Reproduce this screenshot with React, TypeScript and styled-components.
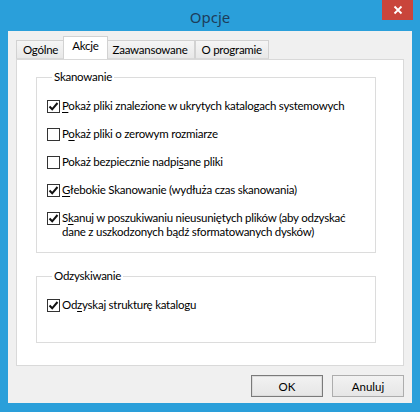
import React from "react";
import styled, { createGlobalStyle } from "styled-components";

const Global = createGlobalStyle`
  html, body { margin: 0; padding: 0; background: #2a9fda; }
  * { box-sizing: border-box; }
`;

const FONT = `Lato, "Noto Sans", "Liberation Sans", sans-serif`;

const Window = styled.div`
  width: 420px;
  height: 412px;
  background: #2a9fda;
  display: flex;
  flex-direction: column;
  font-family: ${FONT};
  font-size: 11.5px;
  letter-spacing: -0.25px;
  color: #000;
`;

const TitleBar = styled.div`
  position: relative;
  height: 31px;
  flex: none;
  display: flex;
  align-items: center;
  justify-content: center;
`;

const Title = styled.div`
  font-family: "Noto Sans", sans-serif;
  font-size: 15px;
  letter-spacing: 0;
  color: #1d3d5a;
  margin-top: 2px;
`;

const CloseButton = styled.div`
  position: absolute;
  top: 0;
  right: 7px;
  width: 31px;
  height: 20px;
  background: #c9453b;
  display: flex;
  align-items: center;
  justify-content: center;
`;

const Client = styled.div`
  flex: 1;
  margin: 0 8px 9px 8px;
  background: #f0f0f0;
  padding: 6px 8px 6px 8px;
  display: flex;
  flex-direction: column;
`;

const TabStrip = styled.div`
  height: 22px;
  display: flex;
  align-items: flex-end;
  position: relative;
  z-index: 1;
`;

const Tab = styled.div<{ $active?: boolean }>`
  height: ${(p) => (p.$active ? 23 : 19)}px;
  padding: 0 ${(p) => (p.$active ? 8 : 6)}px;
  margin: 0 ${(p) => (p.$active ? -2 : 0)}px;
  border: 1px solid #d2d2d2;
  border-bottom: ${(p) => (p.$active ? "none" : "1px solid #d9d9d9")};
  background: ${(p) => (p.$active ? "#ffffff" : "linear-gradient(#f5f5f5, #e8e8e8)")};
  position: relative;
  z-index: ${(p) => (p.$active ? 2 : 1)};
  display: flex;
  align-items: ${(p) => (p.$active ? "flex-start" : "center")};
  padding-top: ${(p) => (p.$active ? 2 : 0)}px;
  color: #000;
  white-space: nowrap;
  & + & { border-left: ${(p) => (p.$active ? "1px solid #d2d2d2" : "none")}; }
`;

const Panel = styled.div`
  height: 307px;
  background: #fff;
  border: 1px solid #d9d9d9;
  padding: 10px 27px 0 19px;
  display: flex;
  flex-direction: column;
  gap: 16px;
`;

const Group = styled.fieldset<{ $height?: number }>`
  margin: 0;
  border: 1px solid #dcdcdc;
  padding: 15px 10px 13px 10px;
  min-width: 0;
  ${(p) => (p.$height ? `height: ${p.$height}px;` : "")}
  display: flex;
  flex-direction: column;
  gap: 14px;
`;

const Legend = styled.legend`
  margin-left: 5px;
  padding: 0 2px;
  line-height: 14px;
`;

const Row = styled.label`
  display: flex;
  align-items: flex-start;
  gap: 2px;
  line-height: 14px;
  white-space: nowrap;
`;

const Box = styled.span`
  flex: none;
  width: 13px;
  height: 13px;
  border: 1px solid #333;
  background: #fff;
  display: flex;
  align-items: center;
  justify-content: center;
  margin-top: 1px;
`;

const Key = styled.span`
  text-decoration: underline;
  text-underline-offset: 2px;
`;

const Footer = styled.div`
  margin-top: 9px;
  display: flex;
  justify-content: flex-end;
  gap: 9px;
`;

const Button = styled.div<{ $default?: boolean }>`
  width: 72px;
  height: 22px;
  border: 1px solid ${(p) => (p.$default ? "#7a7a7a" : "#adadad")};
  background: linear-gradient(#f2f2f2, #e6e6e6);
  display: flex;
  align-items: center;
  justify-content: center;
  letter-spacing: 0;
  ${(p) => (p.$default ? "box-shadow: inset 0 0 0 1px #dcdcdc;" : "")}
`;

const Check = () => (
  <svg width="11" height="11" viewBox="0 0 11 11">
    <path d="M1.5 5.5 L4.2 8.3 L9.5 2" fill="none" stroke="#111" strokeWidth="2" />
  </svg>
);

const Option = ({ checked, children }: { checked?: boolean; children: React.ReactNode }) => (
  <Row>
    <Box>{checked && <Check />}</Box>
    <span>{children}</span>
  </Row>
);

export default function App() {
  return (
    <>
      <Global />
      <Window>
        <TitleBar>
          <Title>Opcje</Title>
          <CloseButton>
            <svg width="10" height="10" viewBox="0 0 10 10">
              <path d="M1.5 1.5 L8.5 8.5 M8.5 1.5 L1.5 8.5" stroke="#fff" strokeWidth="1.8" />
            </svg>
          </CloseButton>
        </TitleBar>
        <Client>
          <TabStrip>
            <Tab>Ogólne</Tab>
            <Tab $active>Akcje</Tab>
            <Tab>Zaawansowane</Tab>
            <Tab>O programie</Tab>
          </TabStrip>
          <Panel>
            <Group>
              <Legend>Skanowanie</Legend>
              <Option checked>
                <Key>P</Key>okaż pliki znalezione w ukrytych katalogach systemowych
              </Option>
              <Option>
                P<Key>o</Key>każ pliki o zerowym rozmiarze
              </Option>
              <Option>
                Pokaż bezpiecznie nadpi<Key>s</Key>ane pliki
              </Option>
              <Option checked>
                <Key>G</Key>łebokie Skanowanie (wydłuża czas skanowania)
              </Option>
              <Option checked>
                S<Key>k</Key>anuj w poszukiwaniu nieusuniętych plików (aby odzyskać
                <br />
                dane z uszkodzonych bądź sformatowanych dysków)
              </Option>
            </Group>
            <Group $height={74}>
              <Legend>Odzyskiwanie</Legend>
              <Option checked>
                Od<Key>z</Key>yskaj strukturę katalogu
              </Option>
            </Group>
          </Panel>
          <Footer>
            <Button $default>OK</Button>
            <Button>Anuluj</Button>
          </Footer>
        </Client>
      </Window>
    </>
  );
}
